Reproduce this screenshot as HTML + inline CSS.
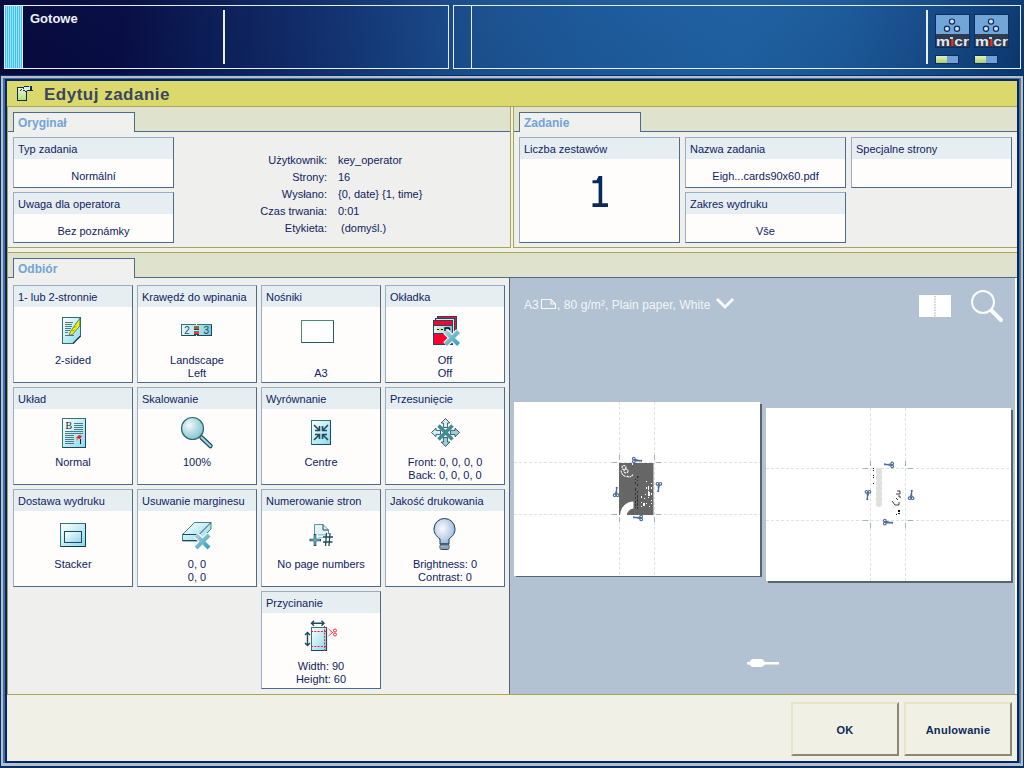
<!DOCTYPE html>
<html><head><meta charset="utf-8">
<style>
*{margin:0;padding:0;box-sizing:border-box}
html,body{width:1024px;height:768px;overflow:hidden}
body{position:relative;background:#02306a;font-family:"Liberation Sans",sans-serif;font-size:11px;color:#0f2262}
.a{position:absolute}
.t{position:absolute;white-space:nowrap;line-height:13px}
#top{left:0;top:0;width:1024px;height:75px;background:linear-gradient(172deg,rgba(255,255,255,0.03),rgba(0,0,0,0.07)),linear-gradient(98deg,#010438 0%,#020840 12%,#061650 19%,#0a2260 26%,#0f3272 34%,#154486 42%,#195090 47%,#1b5a9e 58%,#1e62a6 72%,#1c5c9f 82%,#164e8e 90%,#0b3a74 100%)}
.wb{position:absolute;border:1px solid #e6eef8}
.vl{position:absolute;background:#e6eef8}
.sec{position:absolute;background:#dfe2cc}
.ol{position:absolute;background:#a9a558}
.tabline{position:absolute;height:1px;background:#4d6a88}
.tab{position:absolute;height:20px;background:#f0f0ee;border:1px solid #4d6a88;border-bottom:none;font-weight:bold;font-size:12px;color:#72a4d8;padding:4px 0 0 4px;line-height:13px;white-space:nowrap}
.cont{position:absolute;background:#efefed}
.card{position:absolute;background:#fefdfb;border:1px solid #4d6a88;border-top-color:#98aec6;border-left-color:#98aec6}
.card .h{position:absolute;left:0;top:0;right:0;height:21px;background:#e6eef2}
.card .ht{position:absolute;left:4px;top:5px;white-space:nowrap;line-height:13px}
.card .v{position:absolute;left:0;right:0;text-align:center;white-space:nowrap;line-height:13px}
.card svg{position:absolute}
.btn{position:absolute;width:108px;height:54px;background:#f0f0e4;border:2px solid #e8e4ca;border-right-color:#8c8872;border-bottom-color:#8c8872;font-weight:bold;color:#0a2a5a;text-align:center;line-height:53px;font-size:11px;letter-spacing:0.3px}
.big{position:absolute;left:0;right:0;top:30px;text-align:center;font-size:43px;line-height:50px;color:#0a2a60}
.lbl{position:absolute;white-space:nowrap;line-height:13px;text-align:right;width:80px}
</style></head><body>
<div id="top" class="a">
  <div class="wb" style="left:4px;top:5px;width:445px;height:64px"></div>
  <div class="a" style="left:5px;top:6px;width:17px;height:62px;background:repeating-linear-gradient(90deg,#38c2f6 0 1px,#a2e2f6 1px 2px)"></div>
  <div class="vl" style="left:22px;top:6px;width:1px;height:62px"></div>
  <div class="t" style="left:30px;top:12px;font-size:13px;font-weight:bold;color:#eef2fa">Gotowe</div>
  <div class="vl" style="left:223px;top:10px;width:2px;height:54px"></div>
  <div class="wb" style="left:453px;top:5px;width:568px;height:64px"></div>
  <div class="vl" style="left:471px;top:6px;width:1px;height:62px"></div>
  <div class="vl" style="left:926px;top:10px;width:2px;height:54px"></div>
  <!--MICR-->
</div>
<!-- frame -->
<div class="a" style="left:1px;top:76px;width:1022px;height:690px;background:#b6bfcc"></div>
<div class="a" style="left:3px;top:78px;width:1017px;height:685px;background:#4a6e9a"></div>
<div class="a" style="left:5px;top:79px;width:1014px;height:684px;background:#012766"></div>
<div class="a" style="left:1020px;top:78px;width:1px;height:686px;background:#6e7c6c"></div>
<div class="a" style="left:7px;top:81px;width:1010px;height:680px;background:#f0f0e6"></div>
<!-- header -->
<div class="a" style="left:7px;top:81px;width:1010px;height:25px;background:#dcd96c"></div>
<div class="ol" style="left:7px;top:106px;width:1010px;height:1px"></div>
<div class="t" style="left:44px;top:85px;font-size:17px;line-height:19px;font-weight:bold;letter-spacing:0.5px;color:#3a4660">Edytuj zadanie</div>
<!--HDRICON-->
<!-- top sections -->
<div class="ol" style="left:7px;top:107px;width:1px;height:587px"></div>
<div class="sec" style="left:8px;top:107px;width:502px;height:24px"></div>
<div class="tabline" style="left:8px;top:131px;width:502px"></div>
<div class="cont" style="left:8px;top:132px;width:502px;height:115px"></div>
<div class="ol" style="left:510px;top:107px;width:1px;height:141px"></div>
<div class="ol" style="left:8px;top:247px;width:503px;height:1px"></div>
<div class="tab" style="left:13px;top:112px;width:122px">Oryginał</div>
<div class="sec" style="left:514px;top:107px;width:503px;height:24px"></div>
<div class="tabline" style="left:514px;top:131px;width:503px"></div>
<div class="cont" style="left:514px;top:132px;width:503px;height:115px"></div>
<div class="ol" style="left:513px;top:107px;width:1px;height:141px"></div>
<div class="ol" style="left:513px;top:247px;width:504px;height:1px"></div>
<div class="tab" style="left:519px;top:112px;width:122px">Zadanie</div>
<!--TOPCARDS-->
<div class="card" style="left:13px;top:137px;width:161px;height:51px"><div class="h"></div><div class="ht">Typ zadania</div><div class="v" style="top:32px">Normální</div></div>
<div class="card" style="left:13px;top:192px;width:161px;height:51px"><div class="h"></div><div class="ht">Uwaga dla operatora</div><div class="v" style="top:32px">Bez poznámky</div></div>
<div class="lbl" style="left:247px;top:154px">Użytkownik:</div><div class="t" style="left:338px;top:154px">key_operator</div>
<div class="lbl" style="left:247px;top:171px">Strony:</div><div class="t" style="left:338px;top:171px">16</div>
<div class="lbl" style="left:247px;top:188px">Wysłano:</div><div class="t" style="left:338px;top:188px">{0, date} {1, time}</div>
<div class="lbl" style="left:247px;top:205px">Czas trwania:</div><div class="t" style="left:338px;top:205px">0:01</div>
<div class="lbl" style="left:247px;top:222px">Etykieta:</div><div class="t" style="left:338px;top:222px">&nbsp;(domyśl.)</div>
<div class="card" style="left:519px;top:137px;width:161px;height:106px"><div class="h"></div><div class="ht">Liczba zestawów</div></div>
<div class="card" style="left:685px;top:137px;width:161px;height:51px"><div class="h"></div><div class="ht">Nazwa zadania</div><div class="v" style="top:32px">Eigh...cards90x60.pdf</div></div>
<div class="card" style="left:685px;top:192px;width:161px;height:51px"><div class="h"></div><div class="ht">Zakres wydruku</div><div class="v" style="top:32px">Vše</div></div>
<div class="card" style="left:851px;top:137px;width:161px;height:51px"><div class="h"></div><div class="ht">Specjalne strony</div></div>
<!--/TOPCARDS-->
<!-- bottom section -->
<div class="ol" style="left:8px;top:252px;width:1009px;height:1px"></div>
<div class="sec" style="left:8px;top:253px;width:1009px;height:24px"></div>
<div class="tabline" style="left:8px;top:277px;width:1009px"></div>
<div class="cont" style="left:8px;top:278px;width:501px;height:416px"></div>
<div class="tab" style="left:13px;top:258px;width:122px">Odbiór</div>
<div class="a" style="left:509px;top:278px;width:1px;height:416px;background:#56646c"></div>
<div class="a" style="left:510px;top:278px;width:505px;height:416px;background:#b2c2d2"></div>
<div class="a" style="left:1015px;top:278px;width:2px;height:416px;background:#fbfcfd"></div>
<!--BOTCARDS-->
<div class="card" style="left:13px;top:285px;width:120px;height:98px"><div class="h"></div><div class="ht">1- lub 2-stronnie</div><div class="v" style="top:68px">2-sided</div></div>
<div class="card" style="left:137px;top:285px;width:120px;height:98px"><div class="h"></div><div class="ht">Krawędź do wpinania</div><div class="v" style="top:68px">Landscape</div><div class="v" style="top:81px">Left</div></div>
<div class="card" style="left:261px;top:285px;width:120px;height:98px"><div class="h"></div><div class="ht">Nośniki</div><div class="v" style="top:81px">A3</div></div>
<div class="card" style="left:385px;top:285px;width:120px;height:98px"><div class="h"></div><div class="ht">Okładka</div><div class="v" style="top:68px">Off</div><div class="v" style="top:81px">Off</div></div>
<div class="card" style="left:13px;top:387px;width:120px;height:98px"><div class="h"></div><div class="ht">Układ</div><div class="v" style="top:68px">Normal</div></div>
<div class="card" style="left:137px;top:387px;width:120px;height:98px"><div class="h"></div><div class="ht">Skalowanie</div><div class="v" style="top:68px">100%</div></div>
<div class="card" style="left:261px;top:387px;width:120px;height:98px"><div class="h"></div><div class="ht">Wyrównanie</div><div class="v" style="top:68px">Centre</div></div>
<div class="card" style="left:385px;top:387px;width:120px;height:98px"><div class="h"></div><div class="ht">Przesunięcie</div><div class="v" style="top:68px">Front: 0, 0, 0, 0</div><div class="v" style="top:81px">Back: 0, 0, 0, 0</div></div>
<div class="card" style="left:13px;top:489px;width:120px;height:98px"><div class="h"></div><div class="ht">Dostawa wydruku</div><div class="v" style="top:68px">Stacker</div></div>
<div class="card" style="left:137px;top:489px;width:120px;height:98px"><div class="h"></div><div class="ht">Usuwanie marginesu</div><div class="v" style="top:68px">0, 0</div><div class="v" style="top:81px">0, 0</div></div>
<div class="card" style="left:261px;top:489px;width:120px;height:98px"><div class="h"></div><div class="ht">Numerowanie stron</div><div class="v" style="top:68px">No page numbers</div></div>
<div class="card" style="left:385px;top:489px;width:120px;height:98px"><div class="h"></div><div class="ht">Jakość drukowania</div><div class="v" style="top:68px">Brightness: 0</div><div class="v" style="top:81px">Contrast: 0</div></div>
<div class="card" style="left:261px;top:591px;width:120px;height:98px"><div class="h"></div><div class="ht">Przycinanie</div><div class="v" style="top:68px">Width: 90</div><div class="v" style="top:81px">Height: 60</div></div>
<!--/BOTCARDS-->
<!--PREVIEW-->
<!-- preview -->
<div class="t" style="left:524px;top:298px;font-size:12px;line-height:14px;color:#f2f5f8">A3</div>
<div class="t" style="left:557px;top:298px;font-size:12px;line-height:14px;letter-spacing:0.07px;color:#f2f5f8">, 80 g/m², Plain paper, White</div>
<svg class="a" style="left:0;top:0" width="1024" height="768" viewBox="0 0 1024 768">
 <defs><g id="sc"><circle cx="1.8" cy="1.6" r="1.3"/><circle cx="1.8" cy="4.6" r="1.3"/><path d="M3 2.4 L10 4.3 M3 3.9 L10 3.3"/></g></defs>
 <path d="M541.5 299.5 H551 L555.5 304 V308.5 H541.5 Z M551 299.5 V304 H555.5" fill="none" stroke="#f6f8fa" stroke-width="1.1"/>
 <path d="M717 299 L725 307 L733 299" fill="none" stroke="#fafbfc" stroke-width="2.8"/>
 <rect x="919" y="295" width="32" height="22" fill="#ffffff"/>
 <path d="M935 296 V317" stroke="#98a8ba" stroke-width="1" stroke-dasharray="1.5 1.2"/>
 <circle cx="983" cy="302" r="11" fill="none" stroke="#fbfcfd" stroke-width="2"/>
 <path d="M991.5 310.5 L1001 320" stroke="#fbfcfd" stroke-width="4" stroke-linecap="round"/>
 <!-- page 1 -->
 <rect x="760" y="404" width="2" height="173" fill="#5a646e"/>
 <rect x="516" y="575" width="246" height="2" fill="#5a646e"/>
 <rect x="514" y="402" width="246" height="174" fill="#ffffff"/>
 <g stroke="#dde1e8" stroke-width="1" stroke-dasharray="3 2">
  <path d="M514 462.5 H760 M514 514.5 H760"/>
  <path d="M619.5 402 V576 M654.5 402 V576"/>
 </g>
 <rect x="619" y="463" width="34.5" height="52" fill="#666666"/>
 <path d="M620 515 A14 14 0 0 1 633.5 501.5 V508.5 A7 7 0 0 0 627 515 Z" fill="#ffffff" shape-rendering="auto"/>
 <g fill="none" stroke="#fff" stroke-width="1.1" shape-rendering="auto" stroke-dasharray="2 0.6">
  <circle cx="624" cy="467.5" r="2"/><circle cx="626" cy="471" r="2"/>
  <path d="M621 470.5 Q622 476 626.5 476.5 M627 476 Q630 478.5 633 474.5"/>
 </g>
 <rect x="632" y="463" width="1" height="2" fill="#fff"/>
 <g fill="#ffffff">
  <rect x="646" y="481" width="1" height="1"/><rect x="651" y="483" width="1" height="1"/><rect x="646" y="487" width="1" height="2"/><rect x="648" y="486" width="1" height="4"/><rect x="651" y="487" width="1" height="2"/>
  <rect x="648" y="491" width="1" height="1"/><rect x="645" y="494" width="1" height="1"/><rect x="648" y="492" width="2" height="4"/><rect x="651" y="493" width="1" height="2"/>
  <rect x="641" y="496" width="1" height="2"/><rect x="644" y="498" width="1" height="1"/><rect x="648" y="497" width="1" height="1"/><rect x="651" y="500" width="1" height="1"/>
  <rect x="641" y="502" width="1" height="1"/><rect x="643" y="503" width="2" height="3"/><rect x="646" y="503" width="1" height="1"/><rect x="641" y="506" width="1" height="1"/><rect x="649" y="506" width="1" height="1"/><rect x="651" y="503" width="1" height="1"/>
 </g>
 <g fill="#2a2a2a" opacity="0.85">
  <rect x="637" y="476" width="1.5" height="2"/><rect x="635" y="479" width="1" height="1"/><rect x="637" y="480" width="1" height="1"/><rect x="635" y="482" width="1" height="2"/><rect x="637" y="484" width="1" height="2"/><rect x="635" y="488" width="1" height="3"/><rect x="637" y="491" width="1" height="2"/><rect x="635" y="493" width="1" height="2"/><rect x="637" y="495" width="1" height="3"/><rect x="635" y="497" width="1" height="2"/><rect x="637" y="499" width="1" height="3"/><rect x="635" y="501" width="1" height="2"/><rect x="637" y="503" width="1" height="3"/><rect x="635" y="504" width="1" height="2"/><rect x="637" y="507" width="1" height="2"/><rect x="635" y="507" width="1" height="1"/>
 </g>
 <g fill="#a8b0b8"><rect x="612" y="462" width="5" height="1"/><rect x="656" y="462" width="5" height="1"/><rect x="612" y="514" width="5" height="1"/><rect x="656" y="514" width="5" height="1"/><rect x="619" y="455" width="1" height="5"/><rect x="654" y="455" width="1" height="5"/><rect x="619" y="517" width="1" height="5"/><rect x="654" y="517" width="1" height="5"/></g>
 <g stroke="#4a6a98" stroke-width="1.1" fill="none" shape-rendering="auto">
  <use href="#sc" transform="translate(632 457)"/>
  <use href="#sc" transform="translate(662 482) rotate(90)"/>
  <use href="#sc" transform="translate(643 521) rotate(180)"/>
  <use href="#sc" transform="translate(613 497) rotate(-90)"/>
 </g>
 <!-- page 2 -->
 <rect x="1011" y="410" width="2" height="172" fill="#5a646e"/>
 <rect x="768" y="581" width="245" height="2" fill="#5a646e"/>
 <rect x="766" y="408" width="245" height="173" fill="#ffffff"/>
 <g stroke="#dde1e8" stroke-width="1" stroke-dasharray="3 2">
  <path d="M766 468.5 H1011 M766 520.5 H1011"/>
  <path d="M870.5 408 V581 M905.5 408 V581"/>
 </g>
 <g fill="#e0e0e0" shape-rendering="auto">
  <rect x="876" y="468" width="6" height="2"/>
  <circle cx="879" cy="472" r="3.2"/><circle cx="879" cy="477.5" r="3.2"/><circle cx="879" cy="483" r="3.2"/><circle cx="879" cy="488.5" r="3.2"/><circle cx="879" cy="494" r="3.2"/><circle cx="879" cy="499.5" r="3.2"/><circle cx="879" cy="504" r="3"/>
 </g>
 <g fill="#111">
  <rect x="873" y="468" width="1" height="1"/><rect x="873" y="470" width="1" height="1"/><rect x="873" y="475" width="1" height="1"/><rect x="873" y="477" width="1" height="1"/><rect x="873" y="483" width="1" height="1"/>
  <rect x="898" y="510" width="2" height="2"/><rect x="898" y="513" width="2" height="1"/><rect x="896" y="514" width="1" height="1"/>
 </g>
 <g stroke="#111" stroke-width="0.8" fill="none" shape-rendering="auto">
  <path d="M897 491 H900 V494 H896 M898 496 H900 V498 M896 498 L898 500 M892 501 L895 505 L899 505 M899 502 V505"/>
 </g>
 <g stroke="#4a6a98" stroke-width="1.1" fill="none" shape-rendering="auto">
  <use href="#sc" transform="translate(894 468) rotate(180)"/>
  <use href="#sc" transform="translate(871 490) rotate(90)"/>
  <use href="#sc" transform="translate(908 500) rotate(-90)"/>
  <use href="#sc" transform="translate(883 519)"/>
 </g>
 <g fill="#a8b0b8"><rect x="863" y="468" width="5" height="1"/><rect x="908" y="468" width="5" height="1"/><rect x="863" y="520" width="5" height="1"/><rect x="908" y="520" width="5" height="1"/><rect x="870" y="461" width="1" height="5"/><rect x="905" y="461" width="1" height="5"/><rect x="870" y="523" width="1" height="5"/><rect x="905" y="523" width="1" height="5"/></g>
 <!-- slider -->
 <rect x="747" y="662" width="32" height="2.5" fill="#ffffff"/>
 <path d="M752 659 H762 L765 662 V664.5 L762 667 H752 L749.5 664.5 V662 Z" fill="#ffffff" shape-rendering="auto"/>
</svg>
<!--/PREVIEW-->
<div class="ol" style="left:7px;top:694px;width:1010px;height:1px"></div>
<div class="btn" style="left:791px;top:702px">OK</div>
<div class="btn" style="left:904px;top:702px">Anulowanie</div>
<!--ICONS-->
<svg class="a" style="left:0;top:0" width="1024" height="768" viewBox="0 0 1024 768" shape-rendering="crispEdges">
<defs>
 <linearGradient id="gcy" x1="0" y1="0" x2="1" y2="1"><stop offset="0" stop-color="#ffffff"/><stop offset="1" stop-color="#8ad8ec"/></linearGradient>
 <linearGradient id="gcy2" x1="0" y1="0" x2="1" y2="0"><stop offset="0" stop-color="#e6f6fa"/><stop offset="0.5" stop-color="#b8e4f0"/><stop offset="1" stop-color="#7cc6dc"/></linearGradient>
 <linearGradient id="ggr" x1="0" y1="0" x2="0" y2="1"><stop offset="0" stop-color="#eef2dc"/><stop offset="1" stop-color="#b4e27a"/></linearGradient>
 <linearGradient id="gx" x1="0" y1="0" x2="1" y2="1"><stop offset="0" stop-color="#b4ccd4"/><stop offset="1" stop-color="#2ea4c0"/></linearGradient>
 <radialGradient id="gmag" cx="0.35" cy="0.35" r="0.7"><stop offset="0" stop-color="#f4fafc"/><stop offset="0.5" stop-color="#b8dce4"/><stop offset="1" stop-color="#88c4d4"/></radialGradient>
 <radialGradient id="gbulb" cx="0.4" cy="0.4" r="0.7"><stop offset="0" stop-color="#f8fbff"/><stop offset="0.6" stop-color="#bcd0e8"/><stop offset="1" stop-color="#8eaed4"/></radialGradient>
 <linearGradient id="gsq" x1="0" y1="0" x2="0" y2="1"><stop offset="0" stop-color="#e8f0c0"/><stop offset="1" stop-color="#a8d070"/></linearGradient>
</defs>
<!-- header icon -->
<g>
 <rect x="18" y="88" width="8" height="12" fill="url(#ggr)"/>
 <rect x="17" y="87" width="7" height="1" fill="#0c2a5a"/>
 <rect x="17" y="87" width="1" height="14" fill="#0c2a5a"/>
 <rect x="17" y="100" width="10" height="1" fill="#0c2a5a"/>
 <rect x="26" y="91" width="1" height="10" fill="#0c2a5a"/>
 <path d="M24 87 H30 V90 H26 Z" fill="#e4ecd4"/>
 <rect x="24" y="86" width="5" height="1" fill="#0c2a5a"/>
 <rect x="30" y="86" width="2" height="5" fill="#0c2a5a"/>
 <rect x="27" y="90" width="6" height="1" fill="#0c2a5a"/>
 <rect x="20" y="90" width="1" height="1" fill="#0c2a5a"/><rect x="21" y="89" width="1" height="1" fill="#0c2a5a"/><rect x="23" y="88" width="1" height="1" fill="#0c2a5a"/><rect x="23" y="90" width="2" height="1" fill="#0c2a5a"/><rect x="25" y="91" width="1" height="1" fill="#0c2a5a"/>
</g>
<!-- micr icons -->
<g id="micr">
 <rect x="935" y="14" width="35" height="34" fill="#0c2c66"/>
 <rect x="936" y="15" width="33" height="19" fill="#72a6d6"/>
 <rect x="936" y="34" width="33" height="13" fill="#2c3a52"/>
 <g shape-rendering="auto" stroke="#0a2a6a" stroke-width="1.2" fill="#d8dce0">
  <circle cx="952" cy="21.6" r="2.6"/><circle cx="947" cy="28.8" r="2.6"/><circle cx="957" cy="28.8" r="2.6"/>
 </g>
 <text x="936" y="46" font-family="Liberation Sans" font-weight="bold" font-size="12.5" textLength="33" lengthAdjust="spacingAndGlyphs" fill="#e4e8ea" shape-rendering="auto">m<tspan fill="#f02a10">ı</tspan>cr</text>
 <rect x="950" y="37" width="2.5" height="1.5" fill="#a0e0f0"/>
 <rect x="935" y="55" width="24" height="9" fill="#0c2c66"/>
 <rect x="936" y="56" width="11" height="7" fill="url(#gsq)"/>
 <rect x="947" y="56" width="11" height="7" fill="#70a2d4"/>
</g>
<use href="#micr" x="39" y="0"/>
<!-- 2-sided -->
<g>
 <path d="M62.5 317.5 H80.5 V336 L73 343.5 H62.5 Z" fill="url(#gcy)" stroke="#2a7068" stroke-width="1"/>
 <path d="M80.5 336 L73 343.5" stroke="#1a4a5a" stroke-width="1.2" fill="none" shape-rendering="auto"/>
 <g fill="#4a7c88"><rect x="65" y="322" width="8" height="1"/><rect x="65" y="324" width="7" height="1"/><rect x="65" y="326" width="7" height="1"/><rect x="65" y="328" width="6" height="1"/><rect x="65" y="330" width="5" height="1"/><rect x="65" y="332" width="3" height="1"/><rect x="65" y="335" width="9" height="1"/></g>
 <path d="M80 318 L79.8 326 L72.5 334.5 L69 335.5 L70.5 331.5 Z" fill="#f2f200" stroke="#386c70" stroke-width="0.8" shape-rendering="auto"/>
 <path d="M75 324 L77 323 M73.5 327.5 L76.5 326.5 M72 331 L75 330" stroke="#a8a020" stroke-width="0.8" shape-rendering="auto"/>
</g>
<!-- landscape left -->
<g>
 <rect x="181.5" y="324.5" width="30" height="11" fill="url(#gcy2)" stroke="#2a7a66"/>
 <path d="M211.5 324.5 V335.5 H181.5" fill="none" stroke="#1a4a58"/>
 <rect x="196" y="323" width="1" height="2" fill="#fefdfb"/><rect x="196" y="335" width="1" height="2" fill="#fefdfb"/>
 <text x="184.3" y="334" font-family="Liberation Sans" font-size="10" fill="#1e4a58">2</text>
 <text x="203.5" y="334" font-family="Liberation Sans" font-size="10" fill="#1e4a58">3</text>
 <rect x="194" y="326" width="5" height="1" fill="#3a9a5a"/><rect x="194" y="327" width="5" height="1.5" fill="#f03a2a"/><rect x="194" y="328.5" width="5" height="1" fill="#1a4a58"/>
 <rect x="194" y="331" width="5" height="1" fill="#3a9a5a"/><rect x="194" y="332" width="5" height="1.5" fill="#f03a2a"/><rect x="194" y="333.5" width="5" height="1" fill="#1a4a58"/>
</g>
<!-- media -->
<g>
 <rect x="301.5" y="320.5" width="32" height="22" fill="#ffffff" stroke="#4a8a72"/>
 <path d="M333.5 320.5 V342.5 H301.5" fill="none" stroke="#1e5a6a"/>
</g>
<!-- cover -->
<g>
 <rect x="437.5" y="316.5" width="19" height="21" fill="#ff0a32" stroke="#1e4a5a"/>
 <rect x="435.5" y="318.5" width="19" height="24" fill="#c8eef4" stroke="#1e4a5a"/>
 <rect x="433.5" y="320.5" width="19" height="24" fill="#ff0030" stroke="#1e4a5a"/>
 <rect x="434" y="326" width="18" height="7" fill="url(#gcy2)"/>
 <rect x="434" y="325" width="18" height="1" fill="#1e4a5a"/><rect x="434" y="333" width="18" height="1" fill="#1e4a5a"/>
 <rect x="437" y="329" width="6" height="1" fill="#000"/><rect x="439" y="328" width="2" height="3" fill="#e8e800"/>
 <path d="M445 331 V328 H449 L450 330" fill="none" stroke="#000" stroke-width="1.3" shape-rendering="auto"/>
 <path d="M445.5 331.5 L458.5 344.5 M458.5 331.5 L445.5 344.5" stroke="#fff" stroke-width="6.4" shape-rendering="auto"/>
 <path d="M445.5 331.5 L458.5 344.5 M458.5 331.5 L445.5 344.5" stroke="url(#gx)" stroke-width="4.2" shape-rendering="auto"/>
</g>
<!-- layout normal -->
<g>
 <rect x="62.5" y="418.5" width="23" height="29" fill="url(#gcy)" stroke="#2e7a66"/>
 <path d="M85.5 418.5 V447.5 H62.5" fill="none" stroke="#1a4a58"/>
 <text x="65.5" y="428.5" font-family="Liberation Serif" font-size="10" fill="#222">B</text>
 <g fill="#4a7c88"><rect x="74" y="423" width="9" height="1"/><rect x="74" y="425" width="9" height="1"/><rect x="74" y="427" width="9" height="1"/><rect x="74" y="429" width="9" height="1"/><rect x="65" y="431" width="18" height="1"/><rect x="65" y="433" width="18" height="1"/><rect x="65" y="435" width="9" height="1"/><rect x="65" y="437" width="9" height="1"/><rect x="65" y="439" width="9" height="1"/><rect x="65" y="441" width="9" height="1"/><rect x="65" y="443" width="9" height="1"/></g>
 <path d="M76 438 L79 435 L82 436 L80 439 Z" fill="#ee1a2a" shape-rendering="auto"/>
 <path d="M76 438 L77 441 L78 439" fill="#f08010" shape-rendering="auto"/>
 <rect x="80" y="439" width="1" height="5" fill="#222"/>
</g>
<!-- magnifier -->
<g shape-rendering="auto">
 <path d="M201.5 437.5 L210.5 446" stroke="#1e4a5a" stroke-width="4.5" stroke-linecap="round"/>
 <path d="M201.5 437.5 L210.5 446" stroke="#a8d4e0" stroke-width="2.2" stroke-linecap="round"/>
 <circle cx="192.5" cy="428.5" r="11" fill="url(#gmag)" stroke="#2a6a70" stroke-width="1.2"/>
</g>
<!-- alignment centre -->
<g>
 <rect x="311.5" y="420.5" width="19" height="24" fill="url(#gcy)" stroke="#2e7a66"/>
 <path d="M330.5 420.5 V444.5 H311.5" fill="none" stroke="#1a4a58"/>
 <g stroke="#1e4a5a" stroke-width="1.6" fill="none" shape-rendering="auto">
  <path d="M314 425 L319.5 430.5 M319.5 426 V430.5 H315"/>
  <path d="M328 425 L322.5 430.5 M322.5 426 V430.5 H327"/>
  <path d="M314 440 L319.5 434.5 M319.5 439 V434.5 H315"/>
  <path d="M328 440 L322.5 434.5 M322.5 439 V434.5 H327"/>
 </g>
</g>
<!-- shift -->
<g shape-rendering="auto">
 <path d="M438.5 425.5 L452.5 439.5 M452.5 425.5 L438.5 439.5" stroke="#3e8e94" stroke-width="3.6"/>
 <path d="M445.5 418.5 L449.8 423 H447.6 V427.5 H443.4 V423 H441.2 Z" fill="#d4eef4" stroke="#1e3a4a" stroke-width="0.8"/>
 <path d="M445.5 446.5 L449.8 442 H447.6 V437.5 H443.4 V442 H441.2 Z" fill="#9ccfdc" stroke="#1e3a4a" stroke-width="0.8"/>
 <path d="M431.5 432.5 L436 428.2 V430.4 H440.5 V434.6 H436 V436.8 Z" fill="#d4eef4" stroke="#1e3a4a" stroke-width="0.8"/>
 <path d="M459.5 432.5 L455 428.2 V430.4 H450.5 V434.6 H455 V436.8 Z" fill="#9ccfdc" stroke="#1e3a4a" stroke-width="0.8"/>
</g>
<!-- stacker -->
<g>
 <rect x="60.5" y="523.5" width="25" height="23" fill="url(#gcy)" stroke="#2e7a66"/>
 <path d="M85.5 524 V546.5 H60.5" fill="none" stroke="#1a3a4a" stroke-width="1.2"/>
 <rect x="64.5" y="531.5" width="17" height="11" fill="url(#gcy)" stroke="#1e4a5a" stroke-width="1"/>
</g>
<!-- margin removal -->
<g shape-rendering="auto">
 <path d="M182.5 534.5 L194.5 522.5 H211 V529 L199 541 H182.5 Z" fill="url(#gcy)" stroke="#2e7a66" stroke-width="0.9"/>
 <path d="M182.5 534.5 H199 L211 522.5" fill="none" stroke="#1a4a58" stroke-width="1"/>
 <path d="M182.5 540.5 H199" fill="none" stroke="#1a4a58" stroke-width="1"/>
 <path d="M196 535 L209 548 M209 535 L196 548" stroke="#fff" stroke-width="6.5"/>
 <path d="M196 535 L209 548 M209 535 L196 548" stroke="url(#gx)" stroke-width="4.2"/>
</g>
<!-- page numbering -->
<g shape-rendering="auto">
 <path d="M314.5 534 V524.5 H323 L328.5 530 V534" fill="#e4f2f6" stroke="#4a8a98" stroke-width="0.9"/>
 <path d="M323 524.5 V530 H328.5" fill="none" stroke="#1e4a5a" stroke-width="1"/>
 <rect x="318" y="534" width="8" height="1.5" fill="#8ad0e0"/><rect x="318" y="537" width="5" height="1" fill="#8ad0e0"/>
 <path d="M315 534 V546 M309.5 540 H321" stroke="#1e4a5a" stroke-width="2.6"/>
 <path d="M315 535 V545 M310.5 540 H320" stroke="#7cd0e4" stroke-width="1"/>
 <path d="M326.5 533 L325.5 546 M330 533 L329 546 M323 537 H333 M323 542 H332.5" stroke="#1e4a5a" stroke-width="1.3"/>
</g>
<!-- bulb -->
<g shape-rendering="auto">
 <path d="M440 544 V539 C436 536 434 533 434 529 A10.5 10.5 0 0 1 455 529 C455 533 453 536 449 539 V544 Z" fill="url(#gbulb)" stroke="#1e3a4a" stroke-width="1"/>
 <rect x="440" y="544" width="9" height="5.5" rx="1.5" fill="#6a8aa8" stroke="#1e3a4a" stroke-width="0.9"/>
 <path d="M440 546.3 H449 M440 548 H449" stroke="#c0d0e0" stroke-width="0.7"/>
</g>
<!-- crop -->
<g shape-rendering="auto">
 <rect x="311.5" y="627.5" width="15" height="23" fill="url(#gcy)" stroke="#2e7a66"/>
 <path d="M326.5 627.5 V650.5 H311.5" fill="none" stroke="#1a4a58" stroke-width="1.2"/>
 <path d="M312 623.3 H323.5 M314 620.8 L311.5 623.3 L314 625.8 M321.5 620.8 L324 623.3 L321.5 625.8" fill="none" stroke="#1e4a5a" stroke-width="1.4"/>
 <path d="M307.5 632.5 V645.5 M305 635 L307.5 632.5 L310 635 M305 643 L307.5 645.5 L310 643" fill="none" stroke="#1e4a5a" stroke-width="1.4"/>
 <path d="M311 631.5 H327 M311 646.5 H327 M324.5 626 V651" fill="none" stroke="#ff1a2a" stroke-width="1" stroke-dasharray="2 1.3"/>
 <path d="M328.5 629 L333 633 M328.5 636 L333 632" stroke="#ff1a2a" stroke-width="0.9"/>
 <circle cx="335" cy="630.5" r="1.5" fill="none" stroke="#ff1a2a" stroke-width="0.9"/>
 <circle cx="335" cy="634.5" r="1.5" fill="none" stroke="#ff1a2a" stroke-width="0.9"/>
</g>
</svg>
<!--/ICONS-->
<svg class="a" style="left:0;top:0" width="1024" height="768"><path d="M592.5 180.3 H596.5 L598.6 176 H602.2 V203.2 H608 V207 H592.5 V203.2 H598.6 V183.2 H592.5 Z" fill="#082a5e"/></svg>

</body></html>
